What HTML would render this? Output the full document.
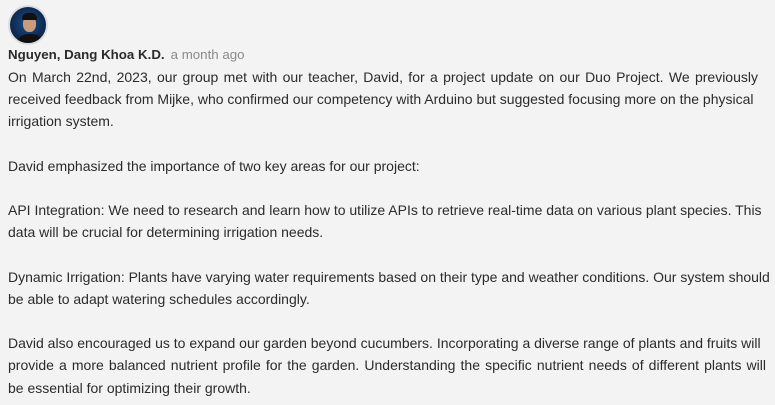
<!DOCTYPE html>
<html><head><meta charset="utf-8"><style>
html,body{margin:0;padding:0;background:#f3f3f3;width:775px;height:405px;overflow:hidden}
body{font-family:"Liberation Sans",Arial,sans-serif;color:#2b2b2b;font-size:13.3px}
.av{position:absolute;left:8px;top:5px;width:40px;height:40px;border-radius:50%;background:radial-gradient(circle at 50% 45%,#1d4f8a 0,#0e2a52 60%,#0a1a33 100%);border:2px solid #ddd;box-sizing:border-box;overflow:hidden}
.av .face{position:absolute;left:13px;top:9px;width:13px;height:16px;border-radius:45%;background:#c99c7c}
.av .hair{position:absolute;left:12px;top:6px;width:15px;height:7px;border-radius:8px 8px 2px 2px;background:#111}
.av .body{position:absolute;left:6px;top:27px;width:28px;height:16px;border-radius:12px 12px 0 0;background:#111}
.name{position:absolute;left:8px;top:47px;font-weight:bold;white-space:nowrap}
.time{font-weight:normal;color:#8a8a8a;margin-left:6px}
.txt{position:absolute;left:8px;top:66px;line-height:22.2px;font-size:14px}
.txt span{display:block;white-space:nowrap;height:22.2px}
.txt span.j{text-align:justify;text-align-last:justify}
.b{height:22.2px}
</style></head><body>
<div class="av"><div class="body"></div><div class="face"></div><div class="hair"></div></div>
<div class="name">Nguyen, Dang Khoa K.D.<span class="time">a month ago</span></div>
<div class="txt">
<span class="j" style="width:750px">On March 22nd, 2023, our group met with our teacher, David, for a project update on our Duo Project. We previously</span>
<span class="j" style="width:722px">received feedback from Mijke, who confirmed our competency with Arduino but suggested focusing more on the physical</span>
<span>irrigation system.</span>
<div class="b"></div>
<span>David emphasized the importance of two key areas for our project:</span>
<div class="b"></div>
<span class="j" style="width:749px">API Integration: We need to research and learn how to utilize APIs to retrieve real-time data on various plant species. This</span>
<span>data will be crucial for determining irrigation needs.</span>
<div class="b"></div>
<span class="j" style="width:758px">Dynamic Irrigation: Plants have varying water requirements based on their type and weather conditions. Our system should</span>
<span>be able to adapt watering schedules accordingly.</span>
<div class="b"></div>
<span class="j" style="width:751px">David also encouraged us to expand our garden beyond cucumbers. Incorporating a diverse range of plants and fruits will</span>
<span class="j" style="width:758px">provide a more balanced nutrient profile for the garden. Understanding the specific nutrient needs of different plants will</span>
<span>be essential for optimizing their growth.</span>
</div>
</body></html>
